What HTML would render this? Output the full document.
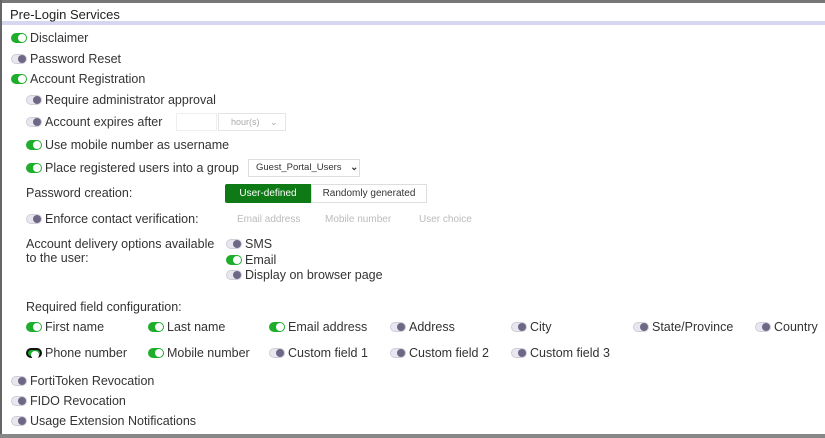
<!DOCTYPE html>
<html><head><style>
body{margin:0;width:825px;height:438px;background:#fff;font-family:"Liberation Sans",sans-serif;font-size:12.5px;color:#333;position:relative;overflow:hidden}
.a{position:absolute;white-space:nowrap;line-height:14px}
.t{position:absolute;width:16px;height:10px;border-radius:5px}
.on{background:#1fae2b}
.on::after{content:"";position:absolute;right:1px;top:1px;width:8px;height:8px;border-radius:50%;background:#fff}
.off{background:#e8e6ee;border:1px solid #d0cdd8;box-sizing:border-box}
.off::after{content:"";position:absolute;right:0;top:0;width:8px;height:8px;border-radius:50%;background:#6e6785}
.g{color:#bbb;font-size:10px}
</style></head><body>
<div style="position:absolute;left:0;top:0;width:825px;height:3px;background:#777"></div>
<div style="position:absolute;left:0;top:0;width:2px;height:438px;background:#666"></div>
<div style="position:absolute;left:0;top:434px;width:825px;height:4px;background:#888"></div>
<div style="position:absolute;left:2px;top:21px;width:823px;height:4px;background:#d6d6f0"></div>
<div class="a" style="left:10px;top:8px;font-size:13px;color:#222">Pre-Login Services</div>

<div class="t on" style="left:11px;top:33px"></div><div class="a" style="left:30px;top:31px">Disclaimer</div>
<div class="t off" style="left:11px;top:54px"></div><div class="a" style="left:30px;top:52px">Password Reset</div>
<div class="t on" style="left:11px;top:74px"></div><div class="a" style="left:30px;top:72px">Account Registration</div>
<div class="t off" style="left:26px;top:95px"></div><div class="a" style="left:45px;top:93px">Require administrator approval</div>
<div class="t off" style="left:26px;top:117px"></div><div class="a" style="left:45px;top:115px">Account expires after</div>
<div style="position:absolute;left:176px;top:113px;width:39px;height:16px;border:1px solid #eee"></div>
<div style="position:absolute;left:218px;top:113px;width:66px;height:16px;border:1px solid #e4e4e4;font-size:9px;color:#aaa;line-height:16px;text-indent:12px">hour(s) <span style="margin-left:8px">⌄</span></div>
<div class="t on" style="left:26px;top:140px"></div><div class="a" style="left:45px;top:138px">Use mobile number as username</div>
<div class="t on" style="left:26px;top:163px"></div><div class="a" style="left:45px;top:161px">Place registered users into a group</div>
<div style="position:absolute;left:248px;top:159px;width:112px;height:18px;border:1px solid #ddd;box-sizing:border-box;font-size:9.5px;color:#333;line-height:16px;padding-left:7px">Guest_Portal_Users <span style="margin-left:6px;font-weight:bold">⌄</span></div>
<div class="a" style="left:26px;top:186px">Password creation:</div>
<div style="position:absolute;left:225px;top:184px;width:86px;height:19px;background:#0e7a16;color:#fff;font-size:10px;line-height:19px;text-align:center;border-radius:2px 0 0 2px">User-defined</div>
<div style="position:absolute;left:311px;top:184px;width:116px;height:19px;border:1px solid #ddd;box-sizing:border-box;font-size:10px;line-height:17px;text-align:center;color:#333">Randomly generated</div>
<div class="t off" style="left:26px;top:214px"></div><div class="a" style="left:45px;top:212px">Enforce contact verification:</div>
<div class="a g" style="left:237px;top:213px">Email address</div>
<div class="a g" style="left:325px;top:213px">Mobile number</div>
<div class="a g" style="left:419px;top:213px">User choice</div>
<div class="a" style="left:26px;top:237px">Account delivery options available<br>to the user:</div>
<div class="t off" style="left:226px;top:239px"></div><div class="a" style="left:245px;top:237px">SMS</div>
<div class="t on" style="left:226px;top:255px"></div><div class="a" style="left:245px;top:253px">Email</div>
<div class="t off" style="left:226px;top:270px"></div><div class="a" style="left:245px;top:268px">Display on browser page</div>
<div class="a" style="left:26px;top:300px">Required field configuration:</div>

<div class="t on" style="left:26px;top:322px"></div><div class="a" style="left:45px;top:320px">First name</div>
<div class="t on" style="left:148px;top:322px"></div><div class="a" style="left:167px;top:320px">Last name</div>
<div class="t on" style="left:269px;top:322px"></div><div class="a" style="left:288px;top:320px">Email address</div>
<div class="t off" style="left:390px;top:322px"></div><div class="a" style="left:409px;top:320px">Address</div>
<div class="t off" style="left:511px;top:322px"></div><div class="a" style="left:530px;top:320px">City</div>
<div class="t off" style="left:633px;top:322px"></div><div class="a" style="left:652px;top:320px">State/Province</div>
<div class="t off" style="left:755px;top:322px"></div><div class="a" style="left:774px;top:320px">Country</div>

<div class="t" style="left:26px;top:348px;background:#111"></div><div class="t on" style="left:28px;top:350px;width:12px;height:6px;background:#1fae2b;border-radius:3px"></div><div class="a" style="left:45px;top:346px">Phone number</div>
<div class="t on" style="left:148px;top:348px"></div><div class="a" style="left:167px;top:346px">Mobile number</div>
<div class="t off" style="left:269px;top:348px"></div><div class="a" style="left:288px;top:346px">Custom field 1</div>
<div class="t off" style="left:390px;top:348px"></div><div class="a" style="left:409px;top:346px">Custom field 2</div>
<div class="t off" style="left:511px;top:348px"></div><div class="a" style="left:530px;top:346px">Custom field 3</div>

<div class="t off" style="left:11px;top:376px"></div><div class="a" style="left:30px;top:374px">FortiToken Revocation</div>
<div class="t off" style="left:11px;top:396px"></div><div class="a" style="left:30px;top:394px">FIDO Revocation</div>
<div class="t off" style="left:11px;top:416px"></div><div class="a" style="left:30px;top:414px">Usage Extension Notifications</div>
</body></html>
